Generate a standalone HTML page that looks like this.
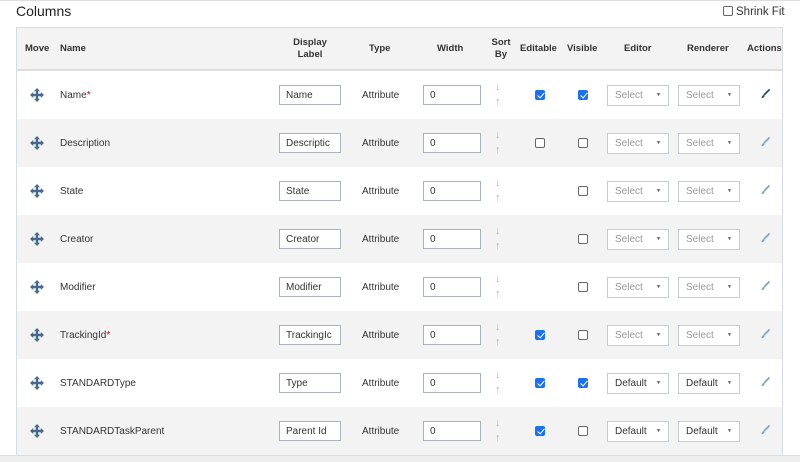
<!DOCTYPE html>
<html><head><style>
*{box-sizing:border-box;margin:0;padding:0}
body{width:800px;height:462px;background:#fff;font-family:"Liberation Sans",sans-serif;position:relative;overflow:hidden;color:#333}
.top{position:absolute;left:0;top:0;width:800px;height:1px;background:#ddd}
.title{position:absolute;left:16px;top:3px;font-size:14px;color:#222}
.shrink{position:absolute;left:723px;top:6px;font-size:11.5px;color:#333}
.shrink i{display:inline-block;width:10px;height:10px;border:1px solid #666;border-radius:2px;vertical-align:-1px;margin-right:3px}
.tbl{position:absolute;left:16px;top:27px;width:767px;height:430px;border:1px solid #d4dde6;border-bottom:none}
.hdr{position:absolute;left:0;top:0;width:765px;height:43px;background:#f3f3f3;border-bottom:2px solid #ddd;font-size:9.5px;font-weight:bold;color:#333}
.hdr span{position:absolute;text-align:center;line-height:12px}
.row{position:absolute;left:0;width:765px;height:48px;font-size:10px;color:#333}
.row.g{background:#f3f3f3}
.a{position:absolute}
.mv{left:13px;top:17px;width:14px;height:14px}
.nm{left:43px;top:19px}
.nm b{color:#c00;font-weight:normal}
.inp{height:20px;border:1px solid #aab3bd;background:#fff;top:14px;font-size:10px;padding:4px 6px;white-space:nowrap;overflow:hidden}
.at{left:345px;top:19px}
.sort{left:478px;top:9px;color:#b5b5b5;font-size:11px;line-height:15px}
.cb{width:10px;height:10px;border:1px solid #666;border-radius:2px;top:19px;background:#fff}
.cb.on{background:#1a73e8;border-color:#1a73e8}
.cb.on:after{content:"";position:absolute;left:2.5px;top:0px;width:3px;height:6px;border:solid #fff;border-width:0 1.5px 1.5px 0;transform:rotate(40deg)}
.sel{height:21px;width:62px;border:1px solid #c5ccd3;background:#fff;top:14px;font-size:10px;padding:4px 7px;color:#999}
.sel.d{color:#333}
.sel:after{content:"▼";position:absolute;right:7px;top:6px;font-size:5px;color:#555}
.act{left:743px;top:18px}
.bot{position:absolute;left:0;top:455px;width:800px;height:7px;background:#eee;border-top:1px solid #ddd}
</style></head><body>
<div class="top"></div>
<div class="title">Columns</div>
<div class="shrink"><i></i>Shrink Fit</div>
<div class="tbl">
<div class="hdr">
<span style="left:8px;top:15px">Move</span>
<span style="left:43px;top:15px">Name</span>
<span style="left:262px;top:9px;width:62px">Display<br>Label</span>
<span style="left:352px;top:15px">Type</span>
<span style="left:420px;top:15px">Width</span>
<span style="left:470px;top:9px;width:28px">Sort<br>By</span>
<span style="left:503px;top:15px">Editable</span>
<span style="left:550px;top:15px">Visible</span>
<span style="left:607px;top:15px">Editor</span>
<span style="left:670px;top:15px">Renderer</span>
<span style="left:730px;top:15px">Actions</span>
</div>
</div>
<div class="bot"></div>
<script>
var rows=[["Name",1,"Name",1,1,"Select",1],["Description",0,"Descriptic",0,0,"Select",0],["State",0,"State",-1,0,"Select",0],["Creator",0,"Creator",-1,0,"Select",0],["Modifier",0,"Modifier",-1,0,"Select",0],["TrackingId",1,"TrackingIc",1,0,"Select",0],["STANDARDType",0,"Type",1,1,"Default",0],["STANDARDTaskParent",0,"Parent Id",1,0,"Default",0]];
var t=document.querySelector('.tbl'),h='';
var mv='<svg class="a mv" viewBox="0 0 14 14"><path d="M7 0L10 3.2H8.2V5.8H10.8V4L14 7L10.8 10V8.2H8.2V10.8H10V10.8L7 14L4 10.8H5.8V8.2H3.2V10L0 7L3.2 4V5.8H5.8V3.2H4Z" fill="#4a6a8a"/></svg>';
rows.forEach(function(r,i){
var y=43+i*48;
var c=r[6]?'#1d4f7a':'#7aa6c8';
h+='<div class="row'+(i%2?' g':'')+'" style="top:'+y+'px">'+mv+
'<div class="a nm">'+r[0]+(r[1]?'<b>*</b>':'')+'</div>'+
'<div class="a inp" style="left:262px;width:62px">'+r[2]+'</div>'+
'<div class="a at">Attribute</div>'+
'<div class="a inp" style="left:406px;width:58px">0</div>'+
'<div class="a sort">↓<br>↑</div>'+
(r[3]>=0?'<div class="a cb'+(r[3]?' on':'')+'" style="left:518px"></div>':'')+
'<div class="a cb'+(r[4]?' on':'')+'" style="left:561px"></div>'+
'<div class="a sel'+(r[5]=="Default"?' d':'')+'" style="left:590px">'+r[5]+'</div>'+
'<div class="a sel'+(r[5]=="Default"?' d':'')+'" style="left:661px">'+r[5]+'</div>'+
'<svg class="a act" viewBox="0 0 10 10" width="10" height="10"><path d="M9 1L4.5 5.5" stroke="'+c+'" stroke-width="1.8" stroke-linecap="round"/><path d="M4 6C2.8 6 2 7 2 8.3L1 9.3C2.8 9.3 4.3 8.5 4.6 7Z" fill="'+c+'"/></svg>'+
'</div>';});
t.insertAdjacentHTML('beforeend',h);
</script>
</body></html>
